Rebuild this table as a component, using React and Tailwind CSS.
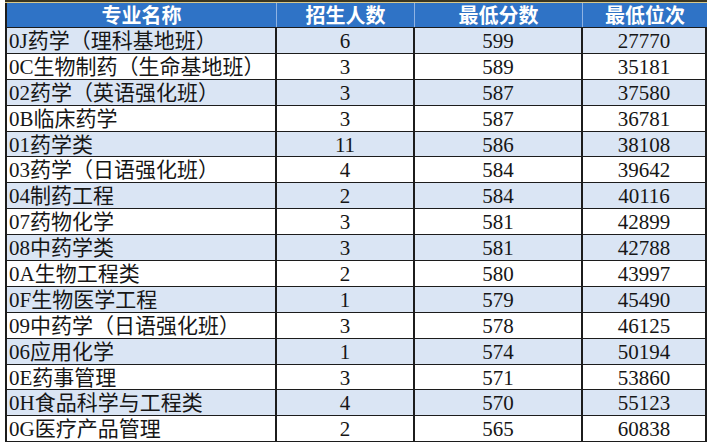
import React from 'react'

const rows = [
    ['0J药学（理科基地班）', '6', '599', '27770'],
    ['0C生物制药（生命基地班）', '3', '589', '35181'],
    ['02药学（英语强化班）', '3', '587', '37580'],
    ['0B临床药学', '3', '587', '36781'],
    ['01药学类', '11', '586', '38108'],
    ['03药学（日语强化班）', '4', '584', '39642'],
    ['04制药工程', '2', '584', '40116'],
    ['07药物化学', '3', '581', '42899'],
    ['08中药学类', '3', '581', '42788'],
    ['0A生物工程类', '2', '580', '43997'],
    ['0F生物医学工程', '1', '579', '45490'],
    ['09中药学（日语强化班）', '3', '578', '46125'],
    ['06应用化学', '1', '574', '50194'],
    ['0E药事管理', '3', '571', '53860'],
    ['0H食品科学与工程类', '4', '570', '55123'],
    ['0G医疗产品管理', '2', '565', '60838'],
]

const cellFont = { fontFamily: '"Liberation Serif", "Noto Sans CJK SC", serif' }

function App() {
    return (
        <div className="w-[710px] h-[446px] bg-white overflow-hidden">
            <div className="ml-[5px] w-[702px]">
                {/* cut-off row above the header */}
                <div className="h-[3px] bg-[#3a3520] border-b border-[#d9c98a]"></div>
                {/* header */}
                <div
                    className="grid grid-cols-[272px_138px_168px_124px] h-[25px] bg-[#2f73c6] border-b border-[#1c1c1c] text-white font-bold text-[20px] leading-none"
                    style={{ fontFamily: '"Noto Sans CJK SC", sans-serif' }}
                >
                    <div className="flex items-center justify-center border-l-[2px] border-[#1c1c1c] border-r border-r-[#8fb3e3]">专业名称</div>
                    <div className="flex items-center justify-center border-r border-[#8fb3e3]">招生人数</div>
                    <div className="flex items-center justify-center border-r border-[#8fb3e3]">最低分数</div>
                    <div className="flex items-center justify-center">最低位次</div>
                </div>
                {rows.map((r, i) => (
                    <div
                        key={i}
                        className={`grid grid-cols-[272px_138px_168px_124px] h-[25.9px] border-b border-[#1c1c1c] text-[21px] leading-none text-[#161616] ${i % 2 === 0 ? 'bg-[#dae5f4]' : 'bg-white'}`}
                        style={cellFont}
                    >
                        <div className="flex items-center pl-[2px] pt-[2px] border-l-[2px] border-r-[2px] border-[#1c1c1c] whitespace-nowrap">{r[0]}</div>
                        <div className="flex items-center justify-center pt-[2px] border-r-[2px] border-[#1c1c1c]">{r[1]}</div>
                        <div className="flex items-center justify-center pt-[2px] border-r-[2px] border-[#1c1c1c]">{r[2]}</div>
                        <div className="flex items-center justify-center pt-[2px] border-r-[2px] border-[#1c1c1c]">{r[3]}</div>
                    </div>
                ))}
            </div>
        </div>
    )
}

export default App
